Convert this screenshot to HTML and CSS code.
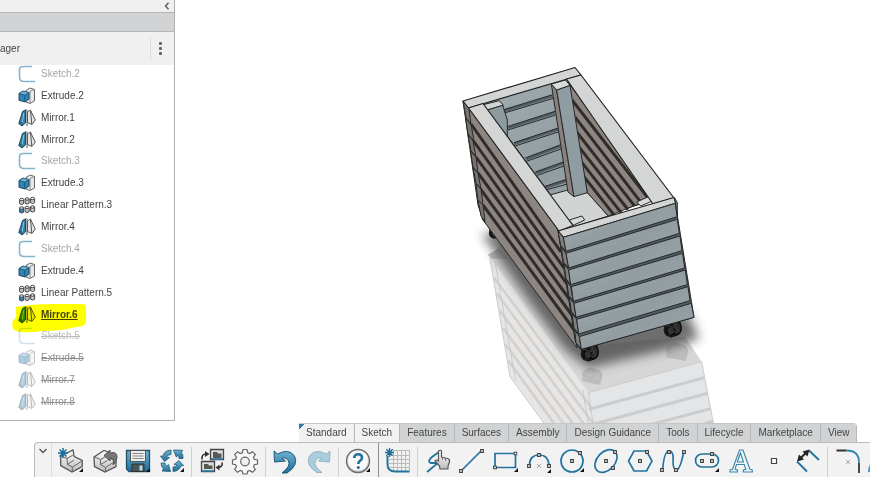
FILE: index.html
```html
<!DOCTYPE html>
<html lang="en">
<head>
<meta charset="utf-8">
<title>Part Design</title>
<link rel="stylesheet" href="styles.css">
</head>
<body>
<svg class="defs" aria-hidden="true">
  <symbol id="t-sketch" viewBox="0 0 18 18"><path d="M14 1.500H5Q1.500 1.500 1.500 5v7q0 4.500 4.500 4.500h11" fill="none" stroke="#86b4ca" stroke-width="1.600"/></symbol>
  <symbol id="t-extrude" viewBox="0 0 18 18">
    <path d="M8 3.500 12 1l4.500 1.500V14L12 16.500 8 15z" fill="#e9e9e9" stroke="#666" stroke-width="1"/><path d="M12 4.500V16M12 4.500l4.300-2" stroke="#777" stroke-width=".8"/>
    <path d="M1 6.500 5 4l6 1.500V12l-4 3-6-1.700z" fill="#2f86b4" stroke="#1d4c68" stroke-width="1"/><path d="m1.500 6.700 5 1.500L10.700 5.700 5.200 4.400z" fill="#6fb3d3"/><path d="M6.800 8.200v6.500M1 6.500l5.800 1.700L11 5.500" fill="none" stroke="#1d4c68" stroke-width=".8"/>
  </symbol>
  <symbol id="t-mirror" viewBox="0 0 18 18">
    <path d="M.8 14.500 4.500 2.500 7.500.8V14L4 17z" fill="#2f80ab" stroke="#25485c" stroke-width="1"/><path d="M4.200 14.500 5.800 4" stroke="#8cc4df" stroke-width="1"/><path d="M.8 14.500 4 13.500V17" fill="none" stroke="#25485c" stroke-width=".8"/>
    <path d="m9.500 3 3-2 .8 2 4 8-3.300 4.500-4.500-2z" fill="#e6e6e6" stroke="#555" stroke-width="1"/><path d="m12.500 1.500 1.300 13.500M9 .5V17" stroke="#555" stroke-width="1"/>
  </symbol>
  <g id="t-cyl"><path d="M.6 2v4.200q2 1.600 4 0V2z" fill="currentColor" stroke="#444" stroke-width="1"/><ellipse cx="2.600" cy="2" rx="2" ry="1.200" fill="#f0f0f0" stroke="#444" stroke-width="1"/></g>
  <symbol id="t-pattern" viewBox="0 0 18 18">
    <g color="#c9c9c9"><use href="#t-cyl" transform="translate(1 1.500)"/><use href="#t-cyl" transform="translate(6.500 1)"/><use href="#t-cyl" transform="translate(12 .5)"/><use href="#t-cyl" transform="translate(6.500 9.500)"/><use href="#t-cyl" transform="translate(12 9)"/></g>
    <g color="#2f86b4"><use href="#t-cyl" transform="translate(1 10)"/></g>
  </symbol>
  <symbol id="star" viewBox="0 0 10 10"><path d="M5 0v10M0 5h10M1.500 1.500l7 7M8.500 1.500l-7 7" stroke="#1f6f9b" stroke-width="1.500"/><circle cx="5" cy="5" r="2.200" fill="#1f6f9b"/></symbol>
  <symbol id="corner" viewBox="0 0 4 4"><path d="M4 0v4H0z" fill="#111"/></symbol>
  <symbol id="node" viewBox="0 0 4 4"><path d="M.6.6h2.800v2.800H.6z" fill="#fff" stroke="#444" stroke-width="1.100"/></symbol>
  <linearGradient id="blue" x2="0" y2="1"><stop stop-color="#6db2d2"/><stop offset="1" stop-color="#1e6c98"/></linearGradient>
  <linearGradient id="steel" x2="0" y2="1"><stop stop-color="#fff"/><stop offset="1" stop-color="#bbb"/></linearGradient>
</svg>

<main class="workspace">
  <aside class="panel">
    <div class="panel-top"><button class="collapse" aria-label="Collapse"><svg width="6" height="8" viewBox="0 0 6 8"><path d="M4.500.7 1.500 4l3 3.300" fill="none" stroke="#555" stroke-width="1.300"/></svg></button></div>
    <div class="panel-strip"></div>
    <div class="panel-head"><span class="panel-title">ager</span><button class="more" aria-label="More options"><i></i><i></i><i></i></button></div>
    <ul class="tree">
      <li class="hidden-item"><svg><use href="#t-sketch"/></svg><span>Sketch.2</span></li>
      <li><svg><use href="#t-extrude"/></svg><span>Extrude.2</span></li>
      <li><svg><use href="#t-mirror"/></svg><span>Mirror.1</span></li>
      <li><svg><use href="#t-mirror"/></svg><span>Mirror.2</span></li>
      <li class="hidden-item"><svg><use href="#t-sketch"/></svg><span>Sketch.3</span></li>
      <li><svg><use href="#t-extrude"/></svg><span>Extrude.3</span></li>
      <li><svg><use href="#t-pattern"/></svg><span>Linear Pattern.3</span></li>
      <li><svg><use href="#t-mirror"/></svg><span>Mirror.4</span></li>
      <li class="hidden-item"><svg><use href="#t-sketch"/></svg><span>Sketch.4</span></li>
      <li><svg><use href="#t-extrude"/></svg><span>Extrude.4</span></li>
      <li><svg><use href="#t-pattern"/></svg><span>Linear Pattern.5</span></li>
      <li class="current"><svg><use href="#t-mirror"/></svg><span>Mirror.6</span>
        <svg class="marker" viewBox="0 0 74 30"><path d="M4 4Q20 1 40 1L70 1Q74 1 74 6V19Q73 24 64 24Q50 28 30 28Q10 31 2 27Q-1 24 1 17Q5 15 4 10z" fill="#ff0"/></svg></li>
      <li class="hidden-item skipped"><svg><use href="#t-sketch"/></svg><span>Sketch.5</span></li>
      <li class="skipped"><svg><use href="#t-extrude"/></svg><span>Extrude.5</span></li>
      <li class="skipped"><svg><use href="#t-mirror"/></svg><span>Mirror.7</span></li>
      <li class="skipped"><svg><use href="#t-mirror"/></svg><span>Mirror.8</span></li>
    </ul>
  </aside>

  <svg class="scene" viewBox="175 0 695 423" preserveAspectRatio="xMidYMid slice" role="img" aria-label="Planter box model">
    <defs>
      <filter id="soft" x="-20%" y="-20%" width="140%" height="140%"><feGaussianBlur stdDeviation="16"/></filter>
      <linearGradient id="face" x1="0" y1="0" x2="1" y2="1"><stop stop-color="#a0acb0"/><stop offset=".5" stop-color="#919da1"/><stop offset="1" stop-color="#9ca8ac"/></linearGradient>
      <clipPath id="rightwall"><path d="M362 84 610 418 560 434 480 480 412 398z"/></clipPath>
      <g id="caster"><path d="M-26-20 24-32 26-8 16 18-4 26-22 14z" fill="#242424"/><ellipse cx="-3" cy="3" rx="23" ry="22" fill="#181818"/><ellipse cx="12" cy="-3" rx="15" ry="21" fill="#2b2b2b" stroke="#090909" stroke-width="4"/><ellipse cx="-5" cy="5" rx="11" ry="12" fill="#333" stroke="#090909" stroke-width="4"/><path d="M-24-12 8-4M-12 20 8 6M4-26 18 8" stroke="#4c4c4c" stroke-width="2"/></g>
    </defs>

    <!-- floor reflection -->
    <g transform="translate(455 190) scale(.3333)">
      <path d="M104 200 165 560 270 704H415L400 608z" fill="#e7e6e5"/>
      <path d="M104 200 140 160 360 470 690 440 740 515 400 608z" fill="#d6d6d6"/>
      <path d="M400 608 740 515 776 704H415z" fill="#e3e5e7"/>
      <path d="M116 262 408 652M125 310 414 700M134 362 388 704M144 414 356 704M152 464 328 704M160 512 300 704" stroke="#d2d1d0" stroke-width="8" fill="none"/>
      <path d="M402 658 748 563M410 704 758 610M555 712 768 656M740 704 774 694" stroke="#cbcccd" stroke-width="9" fill="none"/>
      <path d="M104 200 165 560 270 704M120 216 182 572M384 600 400 704M400 608 415 704M400 608 740 515 776 704" stroke="#cacaca" stroke-width="3" fill="none"/>
      <use href="#caster" transform="translate(410 556) scale(1.1 -.9)" opacity=".13"/>
      <use href="#caster" transform="translate(664 482) scale(1.200 -1)" opacity=".13"/>
      <path d="M98 194 130 176 160 206 112 206z" fill="#b9b9b9"/>
    </g>
    <!-- contact shadow -->
    <g transform="translate(455 190) scale(.3333)">
      <path d="M80 135 150 120 380 430 700 370 732 446 620 482 400 534 330 480 225 340 105 165z" fill="#444" opacity=".78" filter="url(#soft)"/>
      <use href="#caster" transform="translate(120 128) scale(.7)"/>
      <use href="#caster" transform="translate(403 489)"/>
      <use href="#caster" transform="translate(652 417)"/>
      <path d="M78 84 100 96 90 100zM348 452 372 456 366 464z" fill="#222"/>
    </g>

    <!-- long left side -->
    <g stroke="#2a2827" stroke-width="1" stroke-linejoin="round">
      <path d="M463 101 469 108 559 231 566 240 577 348 483 220 478 205z" fill="#8d8581"/>
      <path d="M471 124 561 252M473.500 141 564 268M476 157 567 284M478 173 570 300M480.500 189 572.500 316M483 205 575 331" stroke="#302c2a" stroke-width="3"/>
      <path d="M463 101 469 108 471 125 466 118zM465.500 118 471 124 474 141 468 134zM468 135 473 141 476 157 471 151zM470.500 151 476 157 478 173 473 167zM473 168 478 173 481 189 476 183zM476 184 481 189 483 205 478 200zM478 200 483 205 485 222 481 216z" fill="#777372"/>
    </g>

    <!-- interior -->
    <g transform="translate(450 60) scale(.3333)" stroke="#25282a" stroke-width="3" stroke-linejoin="round">
      <path d="M98 130 350 56 610 420 370 496z" fill="url(#face)"/>
      <path d="M160 154 308 108M172 204 315 158M192 252 325 208M228 298 333 258M258 340 340 310M284 384 350 362" stroke="#555f63" stroke-width="8"/>
      <path d="M158 150 308 104M160 160 310 115M172 200 315 154M174 210 317 165M192 248 325 204M196 258 327 215M226 294 333 254M230 304 335 266M256 336 340 306M262 346 342 318M282 380 350 358M288 390 352 372" fill="none"/>
      <path d="M296 406 354 390 412 398 475 468 372 500z" fill="#d2d4d4"/>
      <path d="M354 66 610 418 560 434 475 468 412 398z" fill="#8d8581"/>
      <g clip-path="url(#rightwall)" stroke="#302c2a" stroke-width="9">
        <path d="M366 120 600 422M374 170 580 436M380 216 560 446M388 262 535 450M396 308 515 460M402 350 500 475"/>
      </g>
      <path d="M100 134 148 122 160 136 112 150z" fill="#d3d5d5"/>
      <path d="M112 150 158 136 172 180 172 234z" fill="#8d9ba1"/>
      <path d="M304 72 320 90 372 410 354 396z" fill="#8b817c"/>
      <path d="M320 90 360 76 412 398 372 410z" fill="#8f9ca1"/>
      <path d="M304 72 346 60 360 76 320 90z" fill="#d9dada"/>
      <path d="M358 480 396 468 404 480 370 496z" fill="#d9dada"/>
      <path d="M560 426 596 410 610 422 572 438z" fill="#d9dada"/>
    </g>

    <!-- top frame -->
    <g fill="#d4d5d5" stroke="#222" stroke-width="1.200" stroke-linejoin="round">
      <path d="M463 101 575 67.500 581 75 468.500 108z"/>
      <path d="M468.500 108 483 103.500 573 225.500 559 231z"/>
      <path d="M566.500 79 581 75 674 198 653 204z"/>
      <path d="M558 231 674 197.500 676 203.500 563.500 237.500z"/>
    </g>

    <!-- front face -->
    <g transform="translate(540 190) scale(.3333)" stroke="#252829" stroke-width="3" stroke-linejoin="round">
      <path d="M54 122 70 142 406 40 462 382 122 478 106 456z" fill="#555c5f"/>
      <g fill="#81807f">
        <path d="M54 122 70 142 78 184 62 166z"/><path d="M64 172 78 190 86 234 70 216z"/><path d="M72 222 86 240 92 284 78 266z"/><path d="M80 272 92 290 100 334 86 316z"/><path d="M88 322 102 340 108 382 94 364z"/><path d="M96 370 110 388 116 432 102 414z"/><path d="M104 420 118 440 124 478 108 458z"/>
      </g>
      <g fill="url(#face)">
        <path d="M70 142 406 40 412 80 78 184z"/><path d="M78 190 412 88 418 130 86 234z"/><path d="M86 240 420 138 426 182 92 284z"/><path d="M94 290 428 190 434 234 100 334z"/><path d="M102 340 436 240 442 284 108 382z"/><path d="M110 388 444 290 450 332 116 432z"/><path d="M118 440 454 340 462 382 124 478z"/>
      </g>
      <path d="M404 24 412 38 412 80 406 40z" fill="#777"/>
    </g>
  </svg>
</main>

<footer class="action-bar">
  <nav class="tabs" aria-label="Sections">
    <button class="first">Standard</button><button class="active">Sketch</button><button>Features</button><button>Surfaces</button><button>Assembly</button><button>Design Guidance</button><button>Tools</button><button>Lifecycle</button><button>Marketplace</button><button>View</button>
  </nav>
  <div class="toolbar">
    <button class="expand" aria-label="Toolbar options"><svg width="10" height="6" viewBox="0 0 10 6"><path d="m1.500 1 3.500 3.500L8.500 1" fill="none" stroke="#555" stroke-width="1.300"/></svg></button>
    <div class="tools">
      <button aria-label="New part"><svg class="ico" viewBox="0 0 28 28"><path d="M3.700 9 16 3l1.200 6.500 8 4v6L15 25 3.700 18.500z" fill="url(#steel)" stroke="#555" stroke-width="1.300"/><path d="m4 9 6 2.500.5 6L15.500 20l9.500-6M10 11.500 16 8M15.300 20v5M10.500 17.500 17 13" fill="none" stroke="#666"/><use href="#star" x="1" y="1" width="10" height="10"/><use href="#corner" x="22" y="21" width="4" height="4"/></svg></button>
      <button aria-label="Open part"><svg class="ico" viewBox="0 0 28 28"><path d="m3 10 10-6.500 5 2v5l7 3.500v5.500L14 25 3.500 19.500z" fill="url(#steel)" stroke="#555" stroke-width="1.300"/><path d="m3.500 10 6 2.500v5l5 3 10-6.500M9.500 12.500l7-4M14.500 20.500V25M9.500 17.500l7-4" fill="none" stroke="#666"/><path d="M13 8.500 19 3v3q7-2 7 4 0 5-4 8 2-7-3-7v3z" fill="#777" stroke="#555"/></svg></button>
      <button aria-label="Save"><svg class="ico" viewBox="0 0 28 28"><path d="M2.500 3.500h23v21H5l-2.500-2.500z" fill="url(#blue)" stroke="#20506b" stroke-width="1.300"/><path d="M6.500 3.500h15v11h-15z" fill="#eee" stroke="#555"/><path d="M8.500 6.500h11M8.500 9h11M8.500 11.500h11" stroke="#888"/><path d="M8 17h12v7.500H8z" fill="#4b5459" stroke="#2c3033"/><path d="M15.500 18.500h3v5h-3z" fill="#b8d7e5"/><use href="#corner" x="22" y="21" width="4" height="4"/></svg></button>
      <button aria-label="Update"><svg class="ico" viewBox="0 0 28 28"><g fill="url(#blue)" stroke="#1e5876" stroke-width=".8"><path d="M13 3v4.500Q9 7.500 8.500 10l3 .5-5 4-4-5.500 2.500.2Q6 3.500 13 3z"/><path d="m15.500 3 9 .3-1 2.500q2 2.200 1.500 5.700h-4q0-2.500-1-3l-1.700 1.500z"/><path d="M3 16h4q0 2 1.500 3l2-1.500 2 7-8.500-.5 1.500-2Q3 19.500 3 16z"/><path d="m21 13.500 4.500 5-2.500.2q-1.500 5.300-8 5.800V20q3.500 0 4-2l-3-.5z"/></g><use href="#corner" x="22" y="21" width="4" height="4"/></svg></button>
      <hr>
      <button aria-label="Switch window"><svg class="ico" viewBox="0 0 28 28"><path d="M12.500 2.500h13v10h-13zM3.500 14.500h13v10h-13z" fill="#ddd" stroke="#444" stroke-width="1.300"/><path d="M15 5h4l1 1.500h3.500V11H15zM6 17h4l1 1.500h3.500V22H6z" fill="#575757"/><path d="M13 12h12M4 24h12" stroke="#2a7aa5" stroke-width="1.500"/><path d="M4 12.500Q3.500 7 8 7M24 15.500Q25 20 20 20.500" fill="none" stroke="#333" stroke-width="1.600"/><path d="m7 4 4.500 3L7 10zM21.500 17.500 17.500 20.500l4 3z" fill="#333"/></svg></button>
      <button aria-label="Settings"><svg class="ico" viewBox="0 0 28 28"><path d="m12 2.500 4 0 .7 3.200 2 .8 2.800-1.800 2.800 2.800-1.800 2.800.8 2 3.200.7v4l-3.200.7-.8 2 1.800 2.800-2.800 2.800-2.800-1.800-2 .8-.7 2.700h-4l-.7-2.700-2-.8-2.800 1.800-2.800-2.800 1.800-2.800-.8-2L1.500 17v-4l3.200-.7.8-2-1.800-2.800 2.800-2.800 2.800 1.800 2-.8z" fill="#f8f8f8" stroke="#666" stroke-width="1.200"/><circle cx="14" cy="14.500" r="4.300" fill="#f1f1f1" stroke="#666" stroke-width="1.200"/></svg></button>
      <hr>
      <button aria-label="Undo"><svg class="ico" viewBox="0 0 28 28"><path d="m3 4 3.500 3Q18 1 23.500 9q4.500 9-7.500 17h-5q9-7 6.500-12Q15.500 10 11 11l3.500 3L3.500 15z" fill="url(#blue)" stroke="#1d5878"/></svg></button>
      <button aria-label="Redo"><svg class="ico" viewBox="0 0 28 28"><path d="m25 4-3.500 3Q10 1 4.500 9 0 18 12 25.500h5q-9-6.500-6.500-11.500Q12.500 10 17 11l-3.500 3L24.500 15z" fill="#a9cddd" stroke="#92b3c2"/></svg></button>
      <hr>
      <button aria-label="Help"><svg class="ico" viewBox="0 0 28 28"><circle cx="14" cy="14" r="11.500" fill="url(#steel)" stroke="#6b6b6b" stroke-width="1.400"/><circle cx="14" cy="14" r="9.800" fill="#fafafa"/><path d="M10.300 11q0-3.700 3.900-3.700 3.800 0 3.800 3.200 0 2-2 3.300-1.700 1.200-1.700 3.200" fill="none" stroke="#22749f" stroke-width="2.600"/><circle cx="14.300" cy="20.500" r="1.600" fill="#22749f"/><use href="#corner" x="22" y="21" width="4" height="4"/></svg></button>
      <hr class="strong">
      <button aria-label="New sketch"><svg class="ico" viewBox="0 0 28 28"><path d="M9 3.500h16.500M5 8.500h20.500M5 12.500h20.500M5 16.500h20.500M5 20.500h20.500M9.500 3v21M13.500 3v21M17.500 3v21M21.500 3v21M25.500 3v21" stroke="#bbb"/><path d="M3.500 9v8q0 7.500 7.500 7.500h14.500" fill="none" stroke="#22749f" stroke-width="2"/><use href="#star" x="1" y="1" width="9" height="9"/></svg></button>
      <hr>
      <button aria-label="Freehand"><svg class="ico" viewBox="0 0 28 28"><path d="M3 25 14 16H6.500Q3 14 8 10L17 3.500" fill="none" stroke="#22749f" stroke-width="1.800"/><path d="M14.500 4q2-1.500 3 0v6l6 1.500q2.500.5 2 3.500l-1.500 4v3h-8l-.5-3-4.500-5q1-2 3.500 0z" fill="url(#steel)" stroke="#555" stroke-width="1.200"/><path d="M18.500 10v3M21.500 11v3" stroke="#777"/></svg></button>
      <button aria-label="Line"><svg class="ico" viewBox="0 0 28 28"><path d="M4 24 24.500 3.500" stroke="#22749f" stroke-width="1.700"/><use href="#node" x="2" y="22" width="4" height="4"/><use href="#node" x="23" y="2" width="4" height="4"/></svg></button>
      <button aria-label="Rectangle"><svg class="ico" viewBox="0 0 28 28"><path d="M4 6.500h20.500v14H4z" fill="none" stroke="#22749f" stroke-width="1.700"/><use href="#node" x="2" y="18.500" width="4" height="4"/><use href="#node" x="22.500" y="4.500" width="4" height="4"/><use href="#corner" x="23" y="21" width="4" height="4"/></svg></button>
      <button aria-label="Arc"><svg class="ico" viewBox="0 0 28 28"><path d="M4.500 18.500Q4.500 8 14 8t10 10.500" fill="none" stroke="#22749f" stroke-width="1.700"/><path d="m12 17 4 4m0-4-4 4" stroke="#aaa"/><use href="#node" x="2" y="17" width="4" height="4"/><use href="#node" x="12" y="6" width="4" height="4"/><use href="#node" x="22" y="17" width="4" height="4"/><use href="#corner" x="22" y="22" width="4" height="4"/></svg></button>
      <button aria-label="Circle"><svg class="ico" viewBox="0 0 28 28"><circle cx="14" cy="14" r="11" fill="none" stroke="#22749f" stroke-width="1.700"/><use href="#node" x="12" y="12" width="4" height="4"/><use href="#node" x="20" y="4" width="4" height="4"/><use href="#corner" x="22" y="21" width="4" height="4"/></svg></button>
      <button aria-label="Ellipse"><svg class="ico" viewBox="0 0 28 28"><ellipse cx="14" cy="14" rx="13" ry="9" transform="rotate(-47 14 14)" fill="none" stroke="#22749f" stroke-width="1.700"/><use href="#node" x="12" y="12" width="4" height="4"/><use href="#node" x="21" y="3" width="4" height="4"/><use href="#node" x="19" y="19" width="4" height="4"/></svg></button>
      <button aria-label="Polygon"><svg class="ico" viewBox="0 0 28 28"><path d="M8 4h12.500L26 14l-5.500 10H8L2.500 14z" fill="none" stroke="#22749f" stroke-width="1.700"/><use href="#node" x="12" y="12" width="4" height="4"/><use href="#node" x="19" y="3" width="4" height="4"/></svg></button>
      <button aria-label="Spline"><svg class="ico" viewBox="0 0 28 28"><path d="M3.500 24Q5 4 10 4t4 10q0 9 3.500 9t7.500-19" fill="none" stroke="#22749f" stroke-width="1.700"/><use href="#node" x="1" y="21" width="4" height="4"/><use href="#node" x="8" y="3" width="4" height="4"/><use href="#node" x="15" y="21" width="4" height="4"/><use href="#node" x="23" y="3" width="4" height="4"/></svg></button>
      <button aria-label="Slot"><svg class="ico" viewBox="0 0 28 28"><rect x="2.500" y="7" width="23" height="13" rx="6.500" fill="none" stroke="#22749f" stroke-width="1.700"/><use href="#node" x="7" y="12" width="4" height="4"/><use href="#node" x="17" y="12" width="4" height="4"/><use href="#node" x="17" y="5" width="4" height="4"/><use href="#corner" x="22" y="21" width="4" height="4"/></svg></button>
      <button aria-label="Text"><svg class="ico" viewBox="0 0 28 28"><path d="M3 25v-2l2.500-.8L12.500 3H16l6.800 19 2.500 1v2h-9v-2l2.500-.7-1.500-4.800H9.500L8 22.200l2.500.8v2zM10.300 15h6.200l-3.100-9z" fill="#eef5f8" fill-rule="evenodd" stroke="#3985ab" stroke-width="1.100"/></svg></button>
      <button aria-label="Point"><svg class="ico" viewBox="0 0 28 28"><path d="M11.500 11.500h5v5h-5z" fill="#fff" stroke="#444" stroke-width="1.200"/></svg></button>
      <button aria-label="Dimension"><svg class="ico" viewBox="0 0 28 28"><path d="m3 14.500 10 10M15 3.500l10 9.500" stroke="#22749f" stroke-width="1.900"/><path d="M5 12.500 13.500 4.500" stroke="#222" stroke-width="2"/><path d="m3 14.500 2-7 5 5zM15.500 2.500l-2 7-5-5z" fill="#222"/></svg></button>
      <hr>
      <button aria-label="Fillet"><svg class="ico" viewBox="0 0 28 28"><path d="M2.500 3.500h10M25 15.500V26" stroke="#333" stroke-width="1.800"/><path d="M12.500 3.500Q25 3.500 25 15.500" fill="none" stroke="#3386af" stroke-width="1.800"/><path d="m12 13 4 4m0-4-4 4" stroke="#aaa"/></svg></button>
      <button aria-label="Trim"><svg class="ico" viewBox="0 0 28 28"><path d="M1 25Q1 16 8 14v11z" fill="#3f9bc7"/></svg></button>
    </div>
  </div>
</footer>
</body>
</html>
```
FILE: styles.css
```css
* { box-sizing: border-box; }

body {
  margin: 0;
  height: 100vh;
  display: flex;
  flex-direction: column;
  overflow: hidden;
  background: #fff;
  color: #444;
  font: 10px/12px "Liberation Sans", Arial, sans-serif;
}

button {
  border: 0;
  padding: 0;
  margin: 0;
  background: none;
  color: inherit;
  font: inherit;
}

.defs { position: absolute; width: 0; height: 0; }

.workspace {
  flex: 1;
  min-height: 0;
  display: grid;
  grid-template-columns: 175px 1fr;
  grid-template-rows: 100%;
}

/* Feature tree panel */
.panel {
  display: flex;
  flex-direction: column;
  margin-bottom: 2px;
  border: solid #b0b0b0;
  border-width: 0 1px 1px 0;
  overflow: hidden;
}

.panel-top {
  display: flex;
  justify-content: flex-end;
  align-items: center;
  height: 12px;
  padding-right: 4px;
  background: #f0f0f0;
}

.collapse { display: flex; }

.panel-strip {
  height: 20px;
  border: solid #b3b5b7;
  border-width: 1px 0;
  background: #d1d3d5;
}

.panel-head {
  display: flex;
  align-items: center;
  justify-content: space-between;
  height: 33px;
  background: #f0f0f0;
}

.more {
  display: flex;
  flex-direction: column;
  align-items: center;
  justify-content: center;
  gap: 2px;
  width: 24px;
  height: 22px;
  padding-right: 4px;
  border-left: 1px solid #dcdcdc;
}

.more i { width: 3px; height: 3px; border-radius: 1px; background: #666; }

.tree {
  flex: 1;
  display: grid;
  grid-auto-rows: 1fr;
  margin: -2px 0 7px;
  padding: 0 0 0 18px;
  list-style: none;
}

.tree li {
  position: relative;
  display: flex;
  align-items: center;
  gap: 5px;
  min-height: 0;
}

.tree svg { width: 18px; height: 18px; }
.hidden-item span { color: #a5a5a5; }

.skipped svg { opacity: .4; }
.skipped span { color: #909090; text-decoration: line-through; }
.skipped.hidden-item span { color: #bbb; }

.current span { font-weight: bold; text-decoration: underline; }

.tree .marker {
  position: absolute;
  left: -6px;
  top: -1px;
  z-index: 1;
  width: 74px;
  height: 30px;
  mix-blend-mode: multiply;
}

.scene { display: block; width: 100%; height: 100%; }

/* Tabs and tools */
.tabs {
  display: flex;
  width: max-content;
  margin-left: 299px;
  border-top: 1px solid #c6c6c6;
  border-radius: 0 4px 0 0;
  overflow: hidden;
}

.tabs button {
  height: 18px;
  padding: 0 7px;
  border-right: 1px solid #b5b7b9;
  background: #d0d2d4;
}

.tabs .first { background: linear-gradient(135deg, #2b7ba5 4px, #f1f1f1 4px); }
.tabs .active { background: #f2f2f2; }

.toolbar {
  display: flex;
  height: 35px;
  margin-left: 34px;
  border: solid #bcbcbc;
  border-width: 1px 0 0 1px;
  border-radius: 4px 0 0 0;
  background: #f2f2f2;
  overflow: hidden;
}

.expand {
  display: flex;
  justify-content: center;
  width: 17px;
  padding-top: 5px;
  border-right: 1px solid #ddd;
}

.tools {
  flex: 1;
  display: flex;
  min-width: 0;
  margin-right: -28px;
  padding-left: 2px;
}

.tools button {
  flex: 1;
  display: flex;
  justify-content: center;
  padding-top: 4px;
  min-width: 0;
}

.ico { flex: none; width: 28px; height: 28px; }

.tools hr {
  flex: none;
  width: 6px;
  margin: 4px 0 0;
  border: 0;
  background: linear-gradient(#d0d0d0, #d0d0d0) center / 1px 100% no-repeat;
}

.tools .strong {
  margin: 0;
  background-image: linear-gradient(#8c8c8c, #8c8c8c);
}
```
